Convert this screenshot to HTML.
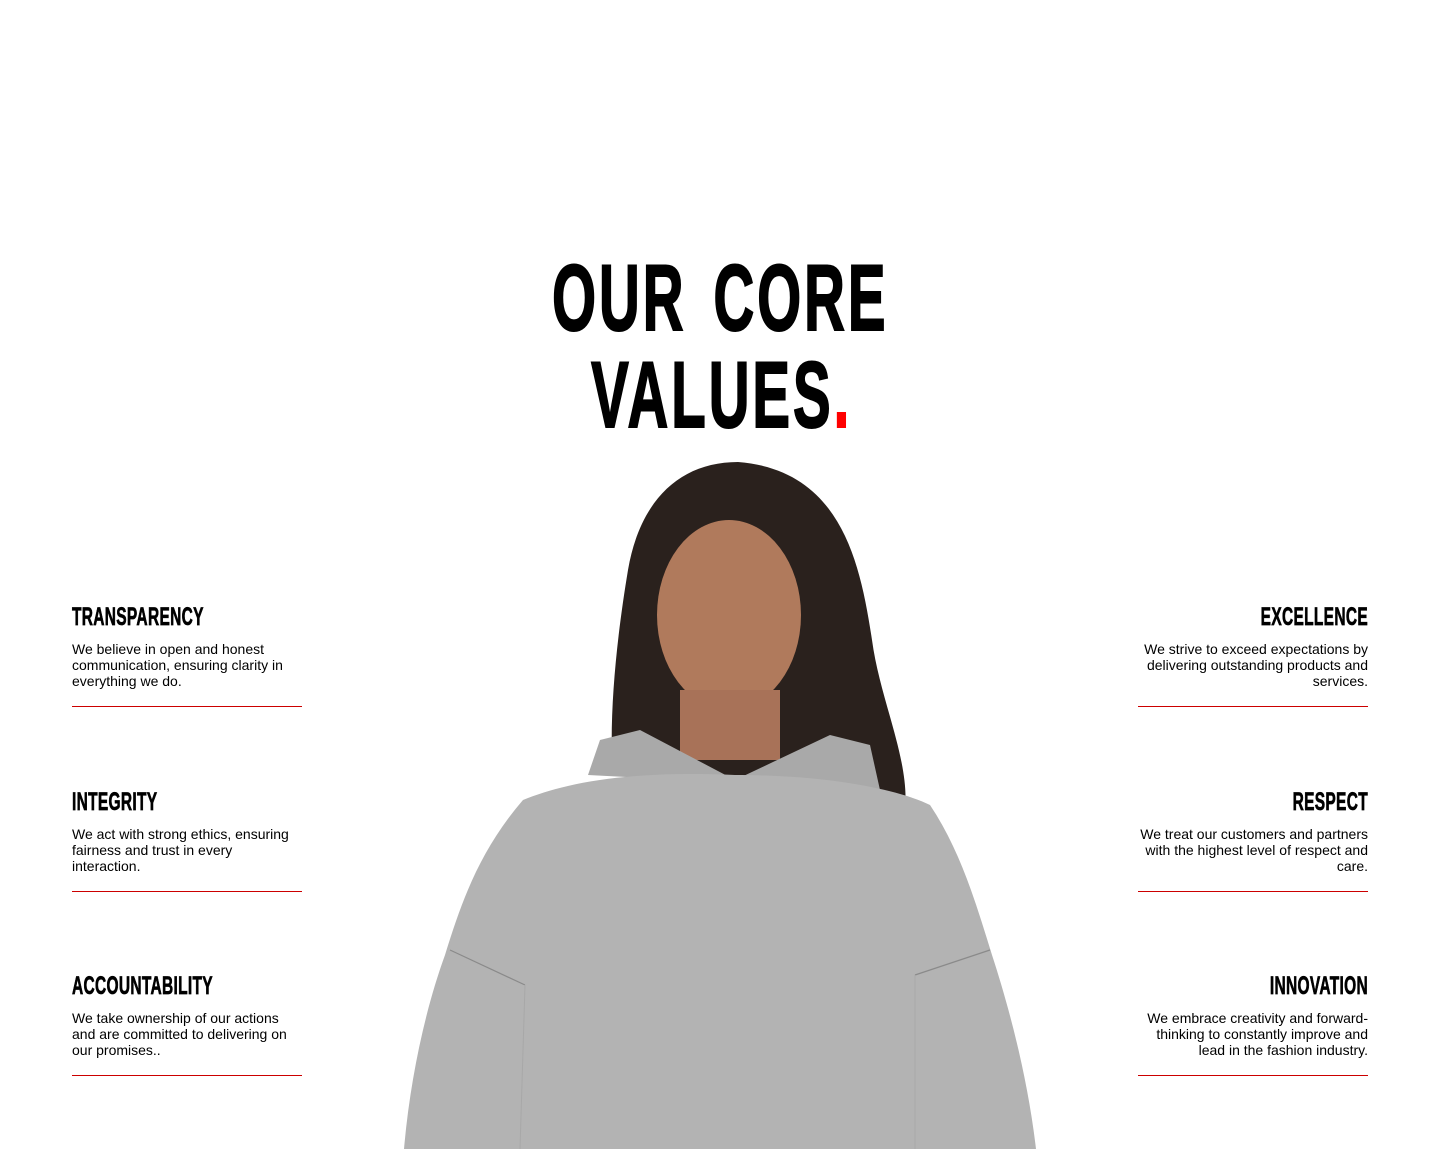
<!DOCTYPE html>
<html><head><meta charset="utf-8"><style>
*{margin:0;padding:0;box-sizing:border-box}
body{width:1440px;height:1149px;background:#fff;position:relative;overflow:hidden;font-family:"Liberation Sans",sans-serif;color:#000}
.title{position:absolute;left:0;width:1440px;top:249px;text-align:center;font-weight:bold;font-size:94px;line-height:97px;}
.title span{display:inline-block;transform:scaleX(0.6);transform-origin:center;white-space:nowrap;letter-spacing:5px;word-spacing:14px;-webkit-text-stroke:2px #000}
.title span.red{transform:none;color:#f00;-webkit-text-stroke:2px #f00;letter-spacing:0}
.blk{position:absolute;width:230px}
.blk h3{font-size:25px;line-height:25px;font-weight:bold;white-space:nowrap;transform:scaleX(0.62);-webkit-text-stroke:0.7px #000;letter-spacing:0.5px}
.L h3{transform-origin:left}
.R h3{transform-origin:right;text-align:right}
.blk p{font-size:14px;line-height:16px;margin-top:11px;white-space:nowrap}
.R p{text-align:right}
.blk hr{border:0;border-top:1px solid #c00;margin-top:17px}
.L{left:72px}.R{left:1138px}
svg{position:absolute;left:0;top:0}
</style></head><body>
<svg width="1440" height="1149" viewBox="0 0 1440 1149">
<path d="M738 462 C680 462 640 500 628 570 C618 630 610 700 612 760 L680 790 L800 790 L905 810 C910 760 880 700 872 640 C860 560 840 470 738 462Z" fill="#2a211d"/>
<ellipse cx="729" cy="615" rx="72" ry="95" fill="#b07a5c"/>
<path d="M680 690 L680 760 L780 760 L780 690Z" fill="#a87258"/>
<path d="M588 775 L600 740 L640 730 L735 780 L830 735 L870 745 L880 790 Z" fill="#a9a9a9"/>
<path d="M523 800 C560 785 620 770 735 775 C830 775 900 790 930 805 C960 850 975 900 992 955 C1010 1010 1028 1080 1036 1149 L404 1149 C410 1080 425 1010 445 955 C462 900 480 850 523 800Z" fill="#b3b3b3"/>
<path d="M450 950 L525 985 M990 950 L915 975" stroke="#8a8a8a" stroke-width="1.2" fill="none"/>
<path d="M525 985 L520 1149 M915 975 L915 1149" stroke="#a8a8a8" stroke-width="1" fill="none"/>
</svg>
<div class="title"><span>OUR CORE</span><br><span>VALUES<span class="red">.</span></span></div>

<div class="blk L" style="top:605px"><h3>TRANSPARENCY</h3><p>We believe in open and honest<br>communication, ensuring clarity in<br>everything we do.</p><hr></div>
<div class="blk L" style="top:790px"><h3>INTEGRITY</h3><p>We act with strong ethics, ensuring<br>fairness and trust in every<br>interaction.</p><hr></div>
<div class="blk L" style="top:974px"><h3>ACCOUNTABILITY</h3><p>We take ownership of our actions<br>and are committed to delivering on<br>our promises..</p><hr></div>

<div class="blk R" style="top:605px"><h3>EXCELLENCE</h3><p>We strive to exceed expectations by<br>delivering outstanding products and<br>services.</p><hr></div>
<div class="blk R" style="top:790px"><h3>RESPECT</h3><p>We treat our customers and partners<br>with the highest level of respect and<br>care.</p><hr></div>
<div class="blk R" style="top:974px"><h3>INNOVATION</h3><p>We embrace creativity and forward-<br>thinking to constantly improve and<br>lead in the fashion industry.</p><hr></div>
</body></html>
